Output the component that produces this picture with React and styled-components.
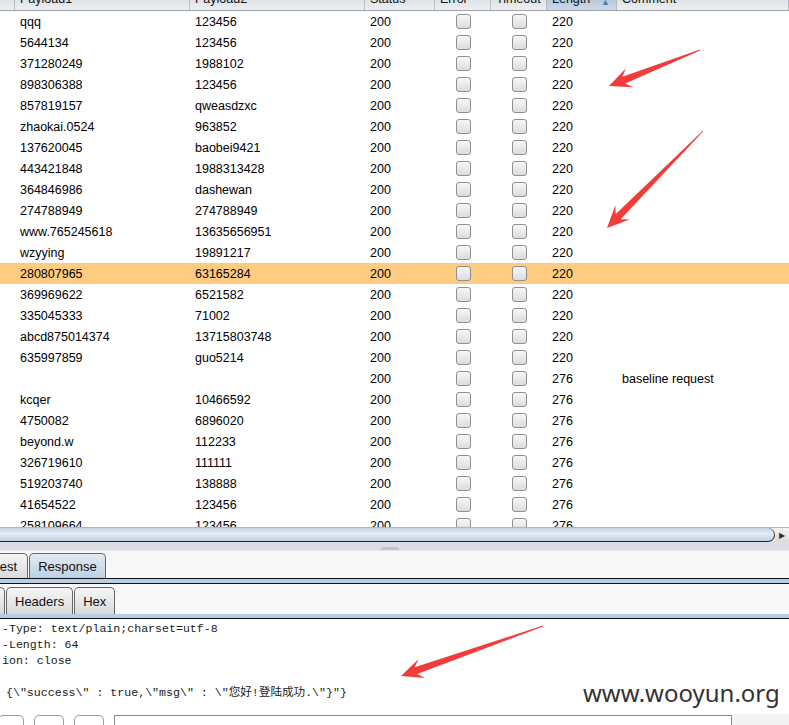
import React from 'react'
import styled, { createGlobalStyle } from 'styled-components'

const rows = [
  ['qqq', '123456', '200', '220'],
  ['5644134', '123456', '200', '220'],
  ['371280249', '1988102', '200', '220'],
  ['898306388', '123456', '200', '220'],
  ['857819157', 'qweasdzxc', '200', '220'],
  ['zhaokai.0524', '963852', '200', '220'],
  ['137620045', 'baobei9421', '200', '220'],
  ['443421848', '1988313428', '200', '220'],
  ['364846986', 'dashewan', '200', '220'],
  ['274788949', '274788949', '200', '220'],
  ['www.765245618', '13635656951', '200', '220'],
  ['wzyying', '19891217', '200', '220'],
  ['280807965', '63165284', '200', '220', '', true],
  ['369969622', '6521582', '200', '220'],
  ['335045333', '71002', '200', '220'],
  ['abcd875014374', '13715803748', '200', '220'],
  ['635997859', 'guo5214', '200', '220'],
  ['', '', '200', '276', 'baseline request'],
  ['kcqer', '10466592', '200', '276'],
  ['4750082', '6896020', '200', '276'],
  ['beyond.w', '112233', '200', '276'],
  ['326719610', '111111', '200', '276'],
  ['519203740', '138888', '200', '276'],
  ['41654522', '123456', '200', '276'],
  ['258109664', '123456', '200', '276'],
]

const columns = [
  { label: '', w: 15 },
  { label: 'Payload1', w: 175 },
  { label: 'Payload2', w: 175 },
  { label: 'Status', w: 70 },
  { label: 'Error', w: 56 },
  { label: 'Timeout', w: 56 },
  { label: 'Length', w: 70, sorted: true },
  { label: 'Comment', w: 172 },
]

const grid = columns.map((c) => c.w + 'px').join(' ')

// response body, the last line sits a few px further in
const responseLines = [
  { text: '-Type: text/plain;charset=utf-8' },
  { text: '-Length: 64' },
  { text: 'ion: close' },
  { text: '' },
  { text: '{\\"success\\" : true,\\"msg\\" : \\"您好!登陆成功.\\"}"}', indent: 4 },
]

const arrows = [
  [700, 50, 609, 86],
  [703, 131, 607, 228],
  [543, 626, 401, 676],
]

function arrowPoints(x1, y1, x2, y2) {
  const len = Math.hypot(x2 - x1, y2 - y1)
  const dx = (x2 - x1) / len
  const dy = (y2 - y1) / len
  const nx = -dy
  const ny = dx
  const head = 22
  const half = 10
  const shaft = 3.6
  const at = (d, o) => [x2 - dx * d + nx * o, y2 - dy * d + ny * o]
  const pts = [
    [x1 + nx * 0.4, y1 + ny * 0.4],
    at(head * 0.72, shaft),
    at(head, half),
    [x2, y2],
    at(head, -half),
    at(head * 0.72, -shaft),
    [x1 - nx * 0.4, y1 - ny * 0.4],
  ]
  return pts.map((p) => p[0].toFixed(1) + ',' + p[1].toFixed(1)).join(' ')
}

const App = () => (
  <Page>
    <GlobalStyle />
    <Table>
      <HeaderRow>
        {columns.map((c, i) => (
          <HeaderCell key={i} $sorted={c.sorted}>
            <span>{c.label}</span>
            {c.sorted && <SortMark>▲</SortMark>}
          </HeaderCell>
        ))}
      </HeaderRow>
      {rows.map((r, i) => (
        <Row key={i} $selected={r[5]}>
          <Cell />
          <Cell>{r[0]}</Cell>
          <Cell>{r[1]}</Cell>
          <Cell>{r[2]}</Cell>
          <CheckCell>
            <Check />
          </CheckCell>
          <CheckCell>
            <Check />
          </CheckCell>
          <Cell>{r[3]}</Cell>
          <Cell>{r[4]}</Cell>
        </Row>
      ))}
    </Table>
    <HScroll>
      <Thumb />
      <ScrollButton>▶</ScrollButton>
    </HScroll>
    <Splitter>
      <Grip />
    </Splitter>
    <TabStrip>
      <Tab $w={28} $cut>
        est
      </Tab>
      <Tab $w={77} $active>
        Response
      </Tab>
    </TabStrip>
    <Band />
    <SubTabStrip>
      <SubTab $cut />
      <SubTab>Headers</SubTab>
      <SubTab>Hex</SubTab>
    </SubTabStrip>
    <Band />
    <Editor>
      {responseLines.map((l, i) => (
        <Line key={i} $indent={l.indent}>
          {l.text || ' '}
        </Line>
      ))}
    </Editor>
    <Toolbar>
      <SmallButton $w={26} />
      <SmallButton $w={30} />
      <SmallButton $w={30} />
      <Search />
    </Toolbar>
    <Overlay viewBox="0 0 789 725">
      {arrows.map((a, i) => (
        <polygon key={i} points={arrowPoints(...a)} fill="#f23b3b" />
      ))}
    </Overlay>
    <Watermark>www.wooyun.org</Watermark>
  </Page>
)

export default App

const GlobalStyle = createGlobalStyle`
  html, body {
    margin: 0;
    padding: 0;
    background: #fff;
  }
`

const Page = styled.div`
  position: relative;
  width: 789px;
  height: 725px;
  overflow: hidden;
  display: flex;
  flex-direction: column;
  font-family: 'Liberation Sans', Arial, sans-serif;
  background: #fff;
`

const Table = styled.div`
  height: 527px;
  overflow: hidden;
  flex-shrink: 0;
`

const HeaderRow = styled.div`
  display: grid;
  grid-template-columns: ${grid} 1fr;
  height: 11px;
  border-bottom: 1px solid #9ea3a9;
  box-sizing: border-box;
`

const HeaderCell = styled.div`
  position: relative;
  display: flex;
  align-items: flex-end;
  overflow: hidden;
  padding-left: 5px;
  border-right: 1px solid #b7bcc3;
  background: ${(p) =>
    p.$sorted
      ? 'linear-gradient(#b7c9dc, #cbd9e7)'
      : 'linear-gradient(#dfe2e6, #eef0f2)'};
  font-size: 12.5px;
  color: #111;

  & > span {
    line-height: 20px;
    white-space: nowrap;
    margin-bottom: 1px;
  }
`

const SortMark = styled.i`
  position: absolute;
  right: 6px;
  top: -3px;
  font-style: normal;
  font-size: 9px;
  color: #4f7eae;
`

const Row = styled.div`
  display: grid;
  grid-template-columns: ${grid} 1fr;
  height: 21px;
  align-items: center;
  background: ${(p) => (p.$selected ? '#fecb80' : '#fff')};
  font-size: 12.5px;
  color: #000;
`

const Cell = styled.div`
  padding-left: 5px;
  white-space: nowrap;
  overflow: hidden;
`

const CheckCell = styled.div`
  display: flex;
  justify-content: center;
`

const Check = styled.span`
  width: 13px;
  height: 13px;
  border: 1px solid #8d8f92;
  border-radius: 3px;
  background: linear-gradient(#f7f7f7, #dcdcde);
`

const HScroll = styled.div`
  display: flex;
  height: 15px;
  flex-shrink: 0;
  border-top: 1px solid #b0b6bd;
  box-sizing: border-box;
  background: #eceef0;
`

const Thumb = styled.div`
  flex: 1;
  border-radius: 0 10px 10px 0;
  border-bottom: 1px solid #1d2c3a;
  border-right: 1px solid #2a3a4a;
  background: linear-gradient(#c3d3e3, #e4ecf4 45%, #bccfe1);
`

const ScrollButton = styled.div`
  width: 14px;
  display: flex;
  align-items: center;
  justify-content: center;
  font-size: 8px;
  color: #333;
  background: linear-gradient(#f4f4f4, #dcdcdc);
`

const Splitter = styled.div`
  height: 8px;
  flex-shrink: 0;
  display: flex;
  justify-content: center;
  align-items: flex-end;
  background: #dcdde2;
  border-bottom: 1px solid #e8e8ea;
`

const Grip = styled.div`
  width: 18px;
  height: 3px;
  margin-right: 10px;
  background: #c2c4c9;
  border-radius: 2px 2px 0 0;
`

const TabStrip = styled.div`
  display: flex;
  align-items: flex-end;
  height: 28px;
  flex-shrink: 0;
  gap: 1px;
  background: #f8f8f8;
  box-sizing: border-box;
  border-bottom: 1px solid #111;
`

const Tab = styled.div`
  width: ${(p) => p.$w}px;
  height: 25px;
  box-sizing: border-box;
  padding-right: ${(p) => (p.$cut ? '10px' : '0')};
  border: 1px solid #666;
  border-left: ${(p) => (p.$cut ? 'none' : '1px solid #666')};
  border-bottom: none;
  border-radius: ${(p) => (p.$cut ? '0 5px 0 0' : '5px 5px 0 0')};
  display: flex;
  align-items: center;
  justify-content: ${(p) => (p.$cut ? 'flex-end' : 'center')};
  font-size: 13px;
  color: #111;
  background: ${(p) =>
    p.$active
      ? 'linear-gradient(#e3ebf3, #bdd0e2)'
      : 'linear-gradient(#f6f6f6, #d9dadc)'};
`

const Band = styled.div`
  height: 4px;
  flex-shrink: 0;
  background: #b8cde1;
  border-bottom: 1px solid #111;
`

const SubTabStrip = styled.div`
  display: flex;
  align-items: flex-end;
  height: 30px;
  flex-shrink: 0;
  gap: 1px;
  background: #f8f8f8;
`

const SubTab = styled.div`
  height: 27px;
  box-sizing: border-box;
  width: ${(p) => (p.$cut ? '5px' : 'auto')};
  padding: 0 ${(p) => (p.$cut ? '0' : '8px')};
  border: 1px solid #666;
  border-left: ${(p) => (p.$cut ? 'none' : '1px solid #666')};
  border-bottom: none;
  border-radius: ${(p) => (p.$cut ? '0 5px 0 0' : '5px 5px 0 0')};
  display: flex;
  align-items: center;
  font-size: 13px;
  color: #111;
  background: linear-gradient(#f6f6f6, #d9dadc);
`

const Editor = styled.div`
  flex: 1;
  padding: 2px 0 0 2px;
  background: #fff;
  font-family: 'Liberation Mono', 'Noto Sans CJK SC', monospace;
  font-size: 11.6px;
  color: #1a1a1a;
`

const Line = styled.div`
  height: 16px;
  line-height: 16px;
  white-space: pre;
  padding-left: ${(p) => p.$indent || 0}px;
`

const Toolbar = styled.div`
  display: flex;
  align-items: flex-start;
  gap: 10px;
  height: 10px;
  flex-shrink: 0;
  padding-top: 1px;
  background: linear-gradient(90deg, #fff 732px, #f3f3f3 732px);
`

const SmallButton = styled.div`
  width: ${(p) => p.$w}px;
  height: 14px;
  box-sizing: border-box;
  border: 1px solid #9a9a9a;
  border-radius: 5px;
  background: #fff;
  &:first-child {
    margin-left: -2px;
  }
`

const Search = styled.div`
  width: 618px;
  height: 14px;
  box-sizing: border-box;
  border: 1px solid #8a8a8a;
  background: #fff;
`

const Overlay = styled.svg`
  position: absolute;
  left: 0;
  top: 0;
  width: 789px;
  height: 725px;
  pointer-events: none;
`

const Watermark = styled.div`
  position: absolute;
  left: 583px;
  top: 676px;
  font-family: 'Noto Sans', sans-serif;
  font-size: 24px;
  color: #333;
  pointer-events: none;
`
